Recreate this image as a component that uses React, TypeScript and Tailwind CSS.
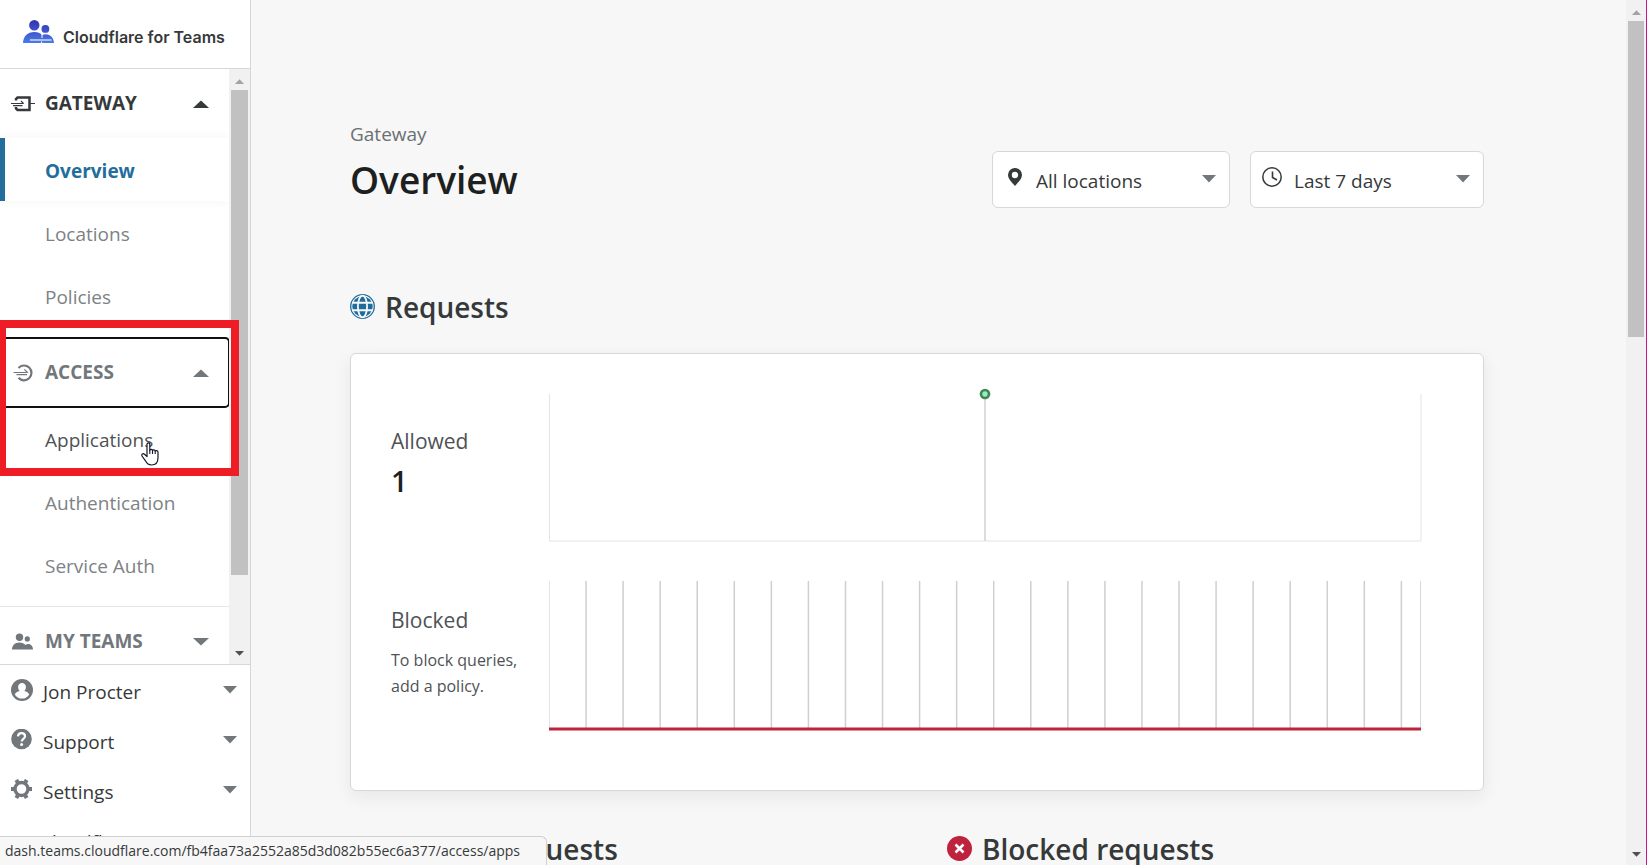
import type { FC, ReactNode } from "react";
import clsx from "clsx";

type IconType = {
  className?: string;
};

const TeamsLogo: FC<IconType> = ({ className = "" }) => (
  <svg className={className} viewBox="0 0 31 24" aria-hidden="true">
    <defs>
      <linearGradient id="logo" x1="0" y1="0" x2="0" y2="1">
        <stop offset="0" stopColor="#3430b0" />
        <stop offset="1" stopColor="#4a7be8" />
      </linearGradient>
      <mask id="logoMask">
        <rect width="31" height="24" fill="#fff" />
        <path d="M7 20h21.5" stroke="#000" strokeWidth="1.1" />
        <path d="M19 12v6M18.6 21.5v3" stroke="#000" strokeWidth="1" />
      </mask>
    </defs>
    <path
      mask="url(#logoMask)"
      fill="url(#logo)"
      d="M11.3 0a5.2 5.2 0 1 1 0 10.4 5.2 5.2 0 0 1 0-10.4zM22.4 5a3.9 3.9 0 1 1 0 7.8 3.9 3.9 0 0 1 0-7.8zM0 23c.2-6.6 4.7-11 11.3-11 3.4 0 6.1 1.2 7.9 3.2 1-.7 2.2-1 3.6-1 4.7 0 8 3.5 8.2 8.8z"
    />
  </svg>
);

const GatewayIcon: FC<IconType> = ({ className = "" }) => (
  <svg className={className} viewBox="0 0 24 18" fill="none" stroke="currentColor" aria-hidden="true">
    <path d="M5 5.500V4L6.500 2.500H18.500V15H6.500L5 13.500V12" strokeWidth="2.500" />
    <path d="M0 8.500H12.500M2 10.600H11.500M18.500 8.500H24" strokeWidth="1.200" />
    <path d="M10 6l2.500 2.500" strokeWidth="1.100" />
  </svg>
);

const AccessIcon: FC<IconType> = ({ className = "" }) => (
  <svg className={className} viewBox="0 0 24 18" fill="none" stroke="currentColor" aria-hidden="true">
    <path d="M7.500 4A7.400 7.400 0 1 1 7.500 13.800" strokeWidth="2.200" />
    <path d="M2.500 8.500H16.500M5.500 10.600H16" strokeWidth="1.100" />
    <path d="M13.300 5.300l3.200 3.200" strokeWidth="1.200" />
  </svg>
);

const PeopleIcon: FC<IconType> = ({ className = "" }) => (
  <svg className={className} viewBox="0 0 24 18" fill="currentColor" aria-hidden="true">
    <circle cx="8.500" cy="4.300" r="3.700" />
    <circle cx="16.300" cy="5.900" r="2.600" />
    <path d="M1 16.500c0-4.200 3-7 7.500-7 2.600 0 4.600.9 6 2.500.7-.7 1.500-1.100 2.600-1.100 3 0 4.900 2.300 4.900 5.600z" />
  </svg>
);

const UserIcon: FC<IconType> = ({ className = "" }) => (
  <svg className={className} viewBox="0 0 22 22" aria-hidden="true">
    <circle cx="11" cy="11" r="11" fill="currentColor" />
    <path
      fill="#fff"
      d="M11 4a3.9 3.9 0 0 1 3.9 4.1c0 1.6-.6 3-1.6 3.9 2.3.5 4.2 1.700 4.900 3.400A8.500 8.500 0 0 1 11 19.600a8.500 8.500 0 0 1-7.200-4.200c.7-1.700 2.600-2.900 4.900-3.400-1-.9-1.600-2.300-1.600-3.900A3.900 3.900 0 0 1 11 4z"
    />
  </svg>
);

const HelpIcon: FC<IconType> = ({ className = "" }) => (
  <svg className={className} viewBox="0 0 22 22" aria-hidden="true">
    <circle cx="10.500" cy="10" r="10.300" fill="currentColor" />
    <path
      d="M7 7.300c.2-2 1.600-3.100 3.500-3.100 2.100 0 3.500 1.200 3.500 3 0 2.700-3.200 2.700-3.300 5.300"
      fill="none"
      stroke="#fff"
      strokeWidth="2.200"
    />
    <circle cx="10.600" cy="15.400" r="1.500" fill="#fff" />
  </svg>
);

const GearIcon: FC<IconType> = ({ className = "" }) => (
  <svg className={className} viewBox="0 0 22 22" fill="none" stroke="currentColor" aria-hidden="true">
    <circle cx="10.500" cy="10" r="6.500" strokeWidth="3.400" />
    <path
      d="M0 10h3M18 10h3M5.300 .9l1.500 2.600M14.200 16.500l1.500 2.600M15.700 .9L14.200 3.500M6.800 16.500l-1.500 2.600"
      strokeWidth="4"
    />
  </svg>
);

const GlobeIcon: FC<IconType> = ({ className = "" }) => (
  <svg className={className} viewBox="0 0 25 25" fill="none" aria-hidden="true">
    <circle cx="12.500" cy="12.500" r="11.800" stroke="#1f6b9c" strokeWidth="1.300" />
    <circle cx="12.500" cy="12.500" r="10.200" fill="#1f6b9c" />
    <ellipse cx="12.500" cy="12.500" rx="4.600" ry="10.800" stroke="#f7f7f7" strokeWidth="1.800" />
    <path d="M2 8.700h21M2 16.300h21" stroke="#f7f7f7" strokeWidth="1.900" />
  </svg>
);

const BlockedIcon: FC<IconType> = ({ className = "" }) => (
  <svg className={className} viewBox="0 0 25 25" aria-hidden="true">
    <circle cx="12.500" cy="12.500" r="12.500" fill="#bf223c" />
    <path d="M8.500 8.500l8 8M16.500 8.500l-8 8" stroke="#fff" strokeWidth="2.600" />
  </svg>
);

const AllowedIcon: FC<IconType> = ({ className = "" }) => (
  <svg className={className} viewBox="0 0 25 25" aria-hidden="true">
    <circle cx="12.500" cy="12.500" r="12.500" fill="#46845a" />
    <path d="M7.500 12.800l3.500 3.500 6.500-7" fill="none" stroke="#fff" strokeWidth="2.400" />
  </svg>
);

const PinIcon: FC<IconType> = ({ className = "" }) => (
  <svg className={className} viewBox="0 0 14 18" fill="currentColor" aria-hidden="true">
    <path
      fillRule="evenodd"
      d="M7 0a7 7 0 0 1 7 7c0 3.600-3.700 7.200-7 11C3.700 14.200 0 10.600 0 7a7 7 0 0 1 7-7zm0 3.800A3.200 3.200 0 1 0 7 10.200 3.200 3.200 0 0 0 7 3.800z"
    />
  </svg>
);

const ClockIcon: FC<IconType> = ({ className = "" }) => (
  <svg className={className} viewBox="0 0 20 20" fill="none" stroke="currentColor" aria-hidden="true">
    <circle cx="10" cy="10" r="9.200" strokeWidth="1.500" />
    <path d="M10.500 4.500v6l4.500 2.500" strokeWidth="1.600" />
  </svg>
);

type CaretType = {
  up?: boolean;
  className?: string;
};

const Caret: FC<CaretType> = ({ up = false, className = "h-2 w-4" }) => (
  <svg className={clsx("shrink-0", className)} viewBox="0 0 16 8" fill="currentColor" preserveAspectRatio="none" aria-hidden="true">
    <path d={up ? "M8 0.500l8 7.500H0z" : "M0 0h16L8 7.500z"} />
  </svg>
);

type ScrollbarType = {
  thumb: number;
  className?: string;
};

const Scrollbar: FC<ScrollbarType> = ({ thumb, className = "w-[21px]" }) => (
  <div className={clsx("flex shrink-0 flex-col bg-[#f1f1f1]", className)} aria-hidden="true">
    <div className="flex h-[21px] shrink-0 items-center justify-center pt-[3px]">
      <Caret up className="h-[5px] w-[9px] text-[#a3a3a3]" />
    </div>
    <div className="min-h-0 grow px-[2px]">
      <div className="bg-[#c1c1c1]" style={{ height: `${thumb}%` }} />
    </div>
    <div className="flex h-[21px] shrink-0 items-center justify-center">
      <Caret className="h-[5px] w-[9px] text-[#505050]" />
    </div>
  </div>
);

type NavGroupType = {
  title: string;
  icon: ReactNode;
  open?: boolean;
  focused?: boolean;
  titleClassName?: string;
  items?: string[];
  active?: string;
  hovered?: string;
};

const NavGroup: FC<NavGroupType> = ({
  title,
  icon,
  open = false,
  focused = false,
  titleClassName = "text-[#72777b]",
  items = [],
  active,
  hovered,
}) => (
  <section className="shrink-0 border-b border-[#e6e7e8] pb-[10px]">
    <button
      type="button"
      aria-expanded={open}
      className={clsx(
        "flex h-[69px] w-full items-center pr-5 pl-[11px] text-left text-[19px] font-bold",
        titleClassName,
        focused && "rounded-sm outline-2 -outline-offset-1 outline-[#101010]"
      )}
    >
      {icon}
      <span className="ml-[10px] grow">{title}</span>
      <Caret up={open} />
    </button>
    {items.map((item) => (
      <a
        key={item}
        href="#"
        className={clsx(
          "flex h-[63px] items-center pt-1 text-[19px]",
          item === active
            ? "border-l-[5px] border-[#236d9c] pl-10 font-bold text-[#236d9c] shadow-[0_0_10px_rgba(54,57,58,0.06)]"
            : "pl-[45px]",
          item === hovered && "text-[#4e5255]",
          item !== active && item !== hovered && "text-[#7d8285]"
        )}
      >
        {item}
      </a>
    ))}
  </section>
);

type FooterItemType = {
  label: string;
  icon?: ReactNode;
  caret?: boolean;
};

const FooterItem: FC<FooterItemType> = ({ label, icon, caret = true }) => (
  <button
    type="button"
    className="flex h-[50px] w-full items-center pr-[13px] pl-[11px] text-left text-[19px] text-[#36393a]"
  >
    <span className="w-[22px] text-[#72777b]">{icon}</span>
    <span className="ml-[10px] grow pt-[5px]">{label}</span>
    {caret && <Caret className="h-2 w-[14px] text-[#72777b]" />}
  </button>
);

type FilterSelectType = {
  label: string;
  value: string;
  icon: ReactNode;
  className: string;
};

const FilterSelect: FC<FilterSelectType> = ({ label, value, icon, className }) => (
  <div className={clsx("relative text-[#36393a]", className)}>
    <select
      aria-label={label}
      className="h-[57px] w-full appearance-none rounded-md border border-[#d5d7d8] bg-white pt-[3px] pl-[43px] text-[19px]"
    >
      <option>{value}</option>
    </select>
    {icon}
    <Caret className="pointer-events-none absolute top-6 right-[14px] h-2 w-[14px] text-[#72777b]" />
  </div>
);

const blockedTicks = Array.from({ length: 23 }, (_, i) => (i + 1) * 4.25);

const AllowedChart: FC = () => (
  <svg className="h-[147px] w-full overflow-visible" role="img" aria-label="Allowed requests over time">
    <line x1="0.5" y1="0" x2="0.5" y2="147" stroke="#e3e4e5" />
    <line x1="100%" y1="0" x2="100%" y2="147" stroke="#e3e4e5" />
    <line x1="0" y1="147" x2="100%" y2="147" stroke="#ececec" strokeWidth="1.5" />
    <line x1="50%" y1="0" x2="50%" y2="147" stroke="#dcdcdc" strokeWidth="2" />
    <circle cx="50%" cy="0" r="4" fill="#8ff0c0" stroke="#46845a" strokeWidth="2.700" />
  </svg>
);

const BlockedChart: FC = () => (
  <svg className="h-[150px] w-full" role="img" aria-label="Blocked requests over time">
    <line x1="0.5" y1="0" x2="0.5" y2="147" stroke="#e3e4e5" />
    <line x1="100%" y1="0" x2="100%" y2="147" stroke="#d5d7d8" strokeWidth="2" />
    {blockedTicks.map((x) => (
      <line key={x} x1={`${x}%`} y1="0" x2={`${x}%`} y2="147" stroke="#cfcfcf" strokeWidth="1.500" />
    ))}
    <line x1="0" y1="148" x2="100%" y2="148" stroke="#bf223c" strokeWidth="3" />
  </svg>
);

const HandCursor: FC<IconType> = ({ className = "" }) => (
  <svg className={className} viewBox="0 0 18 24" aria-hidden="true">
    <path
      d="M6 14.500V2.200C6 .3 8.800.3 8.800 2.200V8.300c.3-1.500 2.700-1.300 2.700.3.4-1.300 2.600-1 2.700.6.500-1 2.800-.8 2.800 1v5.300c0 4-2 7.500-6.500 7.500-3.200 0-4.800-1.700-6-4.200L1 14c-.8-1.800 1-3 2.500-1.700z"
      fill="#fff"
      stroke="#14142b"
      strokeWidth="1.200"
      strokeLinejoin="round"
    />
    <path d="M8.800 8v4M11.500 8.500V12M14.200 9.200V12" stroke="#14142b" strokeWidth="1.100" />
  </svg>
);

const Sidebar: FC = () => (
  <aside className="flex w-[251px] shrink-0 flex-col border-r border-[#d5d7d8] bg-white">
    <header className="flex h-[69px] shrink-0 items-center border-b border-[#d5d7d8] pl-[23px]">
      <TeamsLogo className="mb-1 h-6 w-[31px]" />
      <span className="ml-[9px] pt-[6px] font-[Inter,sans-serif] text-base font-semibold text-[#36393a]">
        Cloudflare for Teams
      </span>
    </header>
    <div className="flex min-h-0 grow">
      <nav className="flex min-w-0 grow flex-col overflow-hidden">
        <NavGroup
          title="GATEWAY"
          icon={<GatewayIcon className="h-[18px] w-6" />}
          open
          titleClassName="text-[#36393a]"
          items={["Overview", "Locations", "Policies"]}
          active="Overview"
        />
        <NavGroup
          title="ACCESS"
          icon={<AccessIcon className="h-[18px] w-6" />}
          open
          focused
          items={["Applications", "Authentication", "Service Auth"]}
          hovered="Applications"
        />
        <NavGroup title="MY TEAMS" icon={<PeopleIcon className="h-[18px] w-6" />} />
      </nav>
      <Scrollbar thumb={87.7} />
    </div>
    <footer className="h-[201px] shrink-0 overflow-hidden border-t border-[#d5d7d8]">
      <FooterItem label="Jon Procter" icon={<UserIcon className="size-[22px]" />} />
      <FooterItem label="Support" icon={<HelpIcon className="size-[22px]" />} />
      <FooterItem label="Settings" icon={<GearIcon className="size-[22px]" />} />
      <FooterItem label="cloudflare" caret={false} />
    </footer>
  </aside>
);

export default function App() {
  return (
    <div className="relative flex h-screen overflow-hidden bg-[#f7f7f7] font-['Open_Sans','Noto_Sans',sans-serif]">
      <Sidebar />
      <main className="min-w-0 grow overflow-hidden pt-[120px] pr-[142px] pl-[99px]">
        <div className="flex items-end justify-between">
          <div>
            <p className="text-[19px] leading-7 text-[#6b7073]">Gateway</p>
            <h1 className="mt-2 text-[37px] leading-[48px] font-semibold text-[#1d1f20]">Overview</h1>
          </div>
          <div className="-mb-1 flex gap-5">
            <FilterSelect
              label="Location"
              value="All locations"
              icon={<PinIcon className="pointer-events-none absolute top-[17px] left-4 h-[18px] w-[14px]" />}
              className="w-[238px]"
            />
            <FilterSelect
              label="Time range"
              value="Last 7 days"
              icon={<ClockIcon className="pointer-events-none absolute top-4 left-3 size-5" />}
              className="w-[234px]"
            />
          </div>
        </div>

        <h2 className="mt-[85px] flex items-center gap-[10px] text-[28px] leading-9 font-semibold text-[#36393a]">
          <GlobeIcon className="mb-[2px] size-[25px]" />
          Requests
        </h2>
        <section className="mt-7 flex flex-col gap-10 rounded-md border border-[#d5d7d8] bg-white pt-10 pr-[62px] pb-[59px] pl-10 shadow-[0_6px_18px_rgba(30,30,60,0.07)]">
          <div className="flex">
            <div className="w-[158px] shrink-0 pt-[33px]">
              <h3 className="text-[21px] leading-7 text-[#4e5255]">Allowed</h3>
              <p className="mt-[6px] text-[29px] leading-10 font-semibold text-[#1d1f20]">1</p>
            </div>
            <AllowedChart />
          </div>
          <div className="flex">
            <div className="w-[158px] shrink-0 pt-[25px]">
              <h3 className="text-[21px] leading-7 text-[#4e5255]">Blocked</h3>
              <p className="mt-[13px] text-base leading-[26px] text-[#4e5255]">
                To block queries,
                <br />
                add a policy.
              </p>
            </div>
            <BlockedChart />
          </div>
        </section>

        <div className="mt-10 grid grid-cols-2 gap-[60px]">
          <h2 className="flex items-center gap-[10px] text-[28px] leading-9 font-semibold text-[#36393a]">
            <AllowedIcon className="mb-[2px] size-[25px]" />
            Allowed requests
          </h2>
          <h2 className="flex items-center gap-[10px] text-[28px] leading-9 font-semibold text-[#36393a]">
            <BlockedIcon className="mb-[2px] size-[25px]" />
            Blocked requests
          </h2>
        </div>
      </main>
      <Scrollbar thumb={38.4} className="w-[21px] border-r border-[#c4168c]" />

      {/* highlighted area with the pointer over "Applications" */}
      <div className="pointer-events-none absolute top-[320px] left-0 h-[156px] w-[239px] border-8 border-l-[6px] border-[#ee1c25]" />
      <HandCursor className="pointer-events-none absolute top-[442px] left-[141px] h-6 w-[18px]" />

      <div className="absolute bottom-0 left-0 flex h-[29px] w-[547px] items-center rounded-tr-md border-t border-r border-[#d0d0d0] bg-[#f7f7f7] pl-[5px] text-sm text-[#36393a]">
        dash.teams.cloudflare.com/fb4faa73a2552a85d3d082b55ec6a377/access/apps
      </div>
    </div>
  );
}
